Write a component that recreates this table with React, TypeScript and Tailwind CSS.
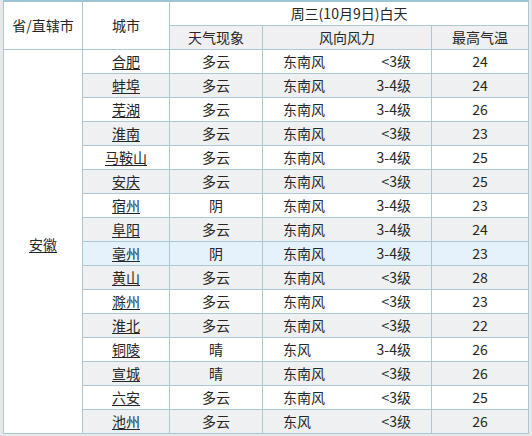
const rows = [
  { city: "合肥", wx: "多云", dir: "东南风", lvl: "<3级", t: 24 },
  { city: "蚌埠", wx: "多云", dir: "东南风", lvl: "3-4级", t: 24 },
  { city: "芜湖", wx: "多云", dir: "东南风", lvl: "3-4级", t: 26 },
  { city: "淮南", wx: "多云", dir: "东南风", lvl: "<3级", t: 23 },
  { city: "马鞍山", wx: "多云", dir: "东南风", lvl: "3-4级", t: 25 },
  { city: "安庆", wx: "多云", dir: "东南风", lvl: "<3级", t: 25 },
  { city: "宿州", wx: "阴", dir: "东南风", lvl: "3-4级", t: 23 },
  { city: "阜阳", wx: "多云", dir: "东南风", lvl: "3-4级", t: 24 },
  { city: "亳州", wx: "阴", dir: "东南风", lvl: "3-4级", t: 23 },
  { city: "黄山", wx: "多云", dir: "东南风", lvl: "<3级", t: 28 },
  { city: "滁州", wx: "多云", dir: "东南风", lvl: "<3级", t: 23 },
  { city: "淮北", wx: "多云", dir: "东南风", lvl: "<3级", t: 22 },
  { city: "铜陵", wx: "晴", dir: "东风", lvl: "3-4级", t: 26 },
  { city: "宣城", wx: "晴", dir: "东南风", lvl: "<3级", t: 26 },
  { city: "六安", wx: "多云", dir: "东南风", lvl: "<3级", t: 25 },
  { city: "池州", wx: "多云", dir: "东风", lvl: "<3级", t: 26 },
];

const cell = "border border-[#a9c9d5] p-0 text-center";

export default function App() {
  return (
    <div
      className="h-[436px] w-[532px] overflow-hidden bg-[#e8e8e8] pl-[3px] text-[14px] leading-[23px] text-[#262626]"
      style={{ fontFamily: '"Noto Sans CJK SC", "Noto Sans", sans-serif' }}
    >
      <table className="w-[526px] table-fixed border-collapse border-t-2 border-t-[#9cc4d5] bg-white">
        <colgroup>
          <col className="w-[79px]" />
          <col className="w-[87px]" />
          <col className="w-[93px]" />
          <col className="w-[169px]" />
          <col className="w-[97px]" />
        </colgroup>
        <thead>
          <tr className="h-[23px]">
            <th rowSpan={2} className={`${cell} border-t-0 font-normal`}>
              省/直辖市
            </th>
            <th rowSpan={2} className={`${cell} border-t-0 font-normal`}>
              城市
            </th>
            <th colSpan={3} className={`${cell} border-t-0 font-normal`}>
              周三(10月9日)白天
            </th>
          </tr>
          <tr className="h-[24px] bg-[#f0f0f2]">
            <th className={`${cell} font-normal`}>天气现象</th>
            <th className={`${cell} font-normal`}>风向风力</th>
            <th className={`${cell} font-normal`}>最高气温</th>
          </tr>
        </thead>
        <tbody>
          {rows.map((r, i) => (
            <tr
              key={r.city}
              className={`h-[24px] ${
                r.city === "亳州" ? "bg-[#e5f1fb]" : i % 2 === 1 ? "bg-[#eff0f2]" : "bg-white"
              }`}
            >
              {i === 0 && (
                <td rowSpan={rows.length} className={`${cell} bg-white pt-[6px]`}>
                  <a className="underline underline-offset-2">安徽</a>
                </td>
              )}
              <td className={cell}>
                <a className="underline underline-offset-2">{r.city}</a>
              </td>
              <td className={cell}>{r.wx}</td>
              <td className={cell}>
                <div className="flex justify-between px-5">
                  <span>{r.dir}</span>
                  <span>{r.lvl}</span>
                </div>
              </td>
              <td className={cell}>{r.t}</td>
            </tr>
          ))}
        </tbody>
      </table>
    </div>
  );
}
